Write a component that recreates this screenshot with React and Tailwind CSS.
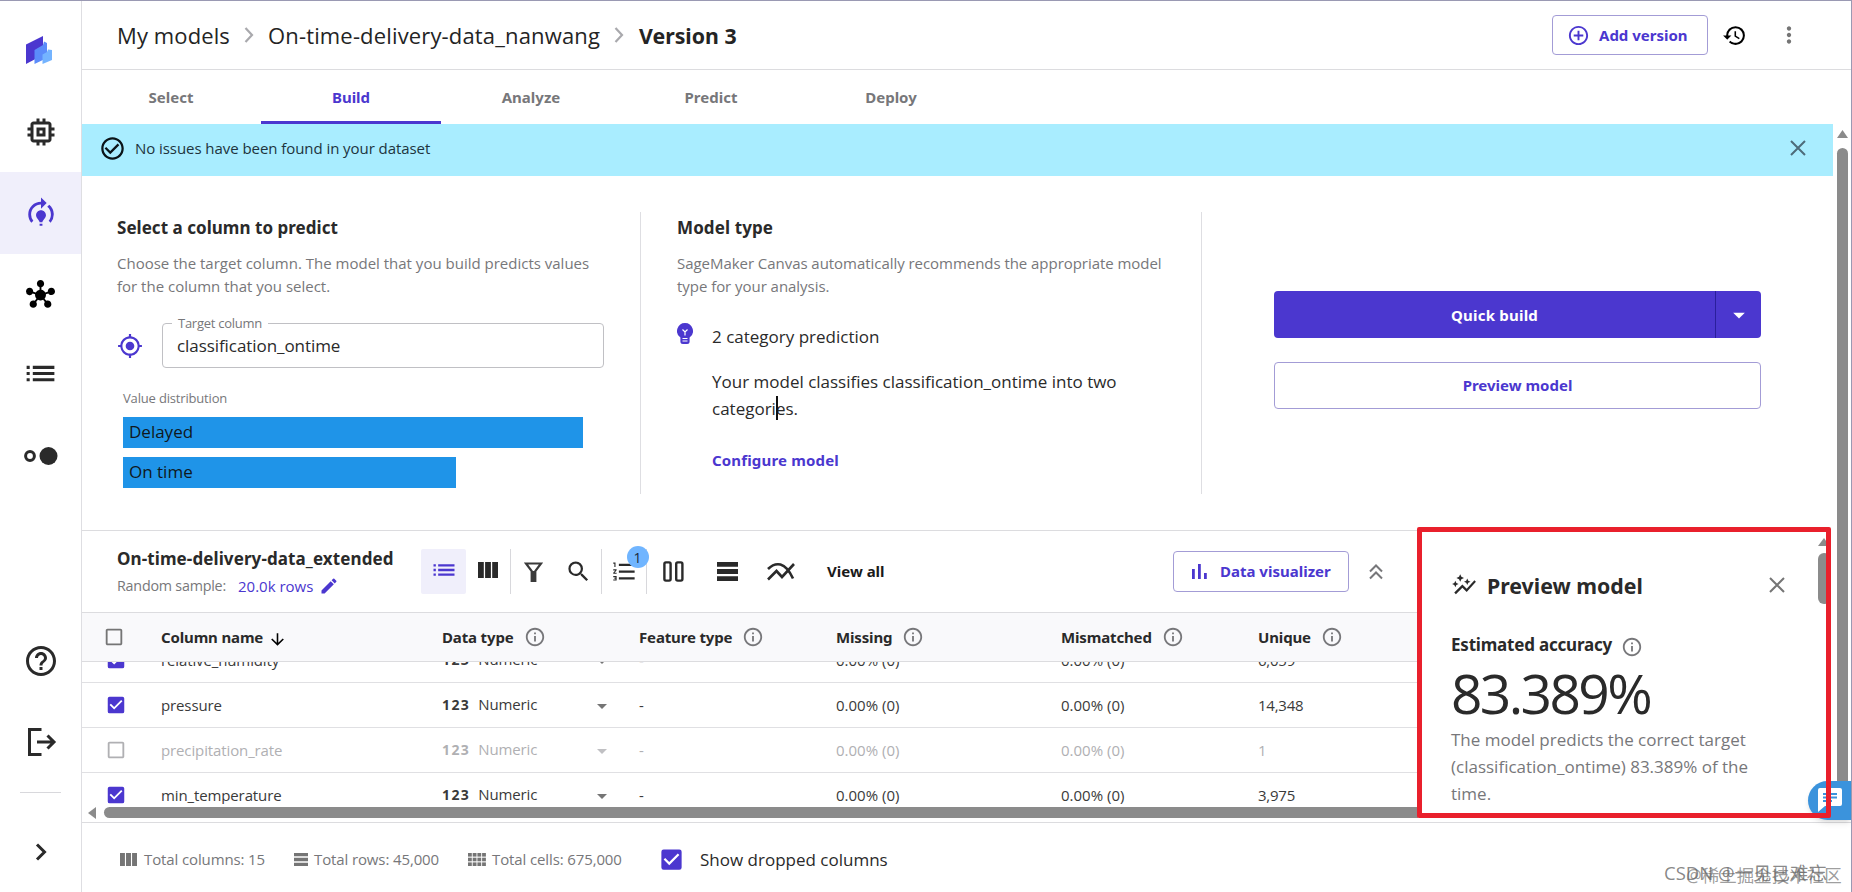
import React from "react";
import {
  MdMemory, MdModelTraining, MdHub, MdList, MdHelpOutline, MdAddCircleOutline,
  MdCheckCircleOutline, MdMyLocation, MdHistory, MdMoreVert, MdEdit,
  MdSearch, MdFormatListNumbered, MdInfoOutline, MdCheckBox, MdCheckBoxOutlineBlank, MdArrowDropDown,
  MdArrowDownward, MdOutlineAutoGraph,
} from "react-icons/md";

const BOLD = "font-['Noto_Sans','Open_Sans',sans-serif] font-bold";

function Logo() {
  return (
    <svg width="28" height="30" viewBox="0 0 28 30">
      <path d="M1 9.500L18 1v19L1 29z" fill="#4b37cf" />
      <path d="M9.500 15L18 10l1-3.500 3 1.500v15L9.500 29z" fill="#5b8cfa" />
      <path d="M17.500 19.500L22 17l1-2.500 4 .5v10l-9.500 4z" fill="#74b4ff" />
    </svg>
  );
}

function Dots() {
  return (
    <svg width="34" height="18" viewBox="0 0 34 18">
      <circle cx="6" cy="9" r="4.400" fill="none" stroke="#2a2a2a" strokeWidth="3" />
      <circle cx="24.500" cy="9" r="9" fill="#2a2a2a" />
    </svg>
  );
}

function Cross({ size = 16, className = "" }) {
  return (
    <svg width={size} height={size} viewBox="0 0 16 16" fill="none" stroke="currentColor" strokeWidth="2" className={className}><path d="M1 1l14 14M15 1L1 15" /></svg>
  );
}

const SIDE = [
  { h: "h-20", icon: <MdMemory size={36} /> },
  { h: "h-[82px]", icon: <MdModelTraining size={34} />, on: true },
  { h: "h-20", icon: <MdHub size={29} color="#000" /> },
  { h: "h-[82px]", icon: <MdList size={37} className="-mt-1" /> },
  { h: "h-20", icon: <Dots /> },
];

function Sidebar() {
  return (
    <nav className="flex w-[82px] shrink-0 flex-col items-center border-r border-[#dedee2] text-[#2a2a2a]">
      <div className="flex h-[91px] w-full items-center justify-center pt-1.5 pr-1"><Logo /></div>
      {SIDE.map((s, i) => (
        <div key={i} className={`flex w-full items-center justify-center ${s.h} ${s.on ? "bg-[#f0effb] text-[#4b37cf]" : ""}`}>{s.icon}</div>
      ))}
      <div className="mt-[125px] flex h-[80px] items-center"><MdHelpOutline size={36} /></div>
      <div className="flex h-[82px] items-center pl-0.5">
        <svg width="30" height="30" viewBox="0 0 30 30" fill="none" stroke="currentColor" strokeWidth="3">
          <path d="M14.500 2.500H2.500v25h12M10 15h17M20.500 8.500L27 15l-6.500 6.500" />
        </svg>
      </div>
      <div className="mt-[9px] h-px w-[41px] bg-[#d8d8dc]" />
      <div className="mt-[50px]">
        <svg width="12" height="18" viewBox="0 0 12 18" fill="none" stroke="currentColor" strokeWidth="3"><path d="M2 1.500L9.500 9 2 16.500" /></svg>
      </div>
    </nav>
  );
}

function Crumb() {
  return (
    <svg width="10" height="16" viewBox="0 0 10 16" fill="none" stroke="#a9a9ad" strokeWidth="2.200"><path d="M1.500 1L8 8l-6.500 7" /></svg>
  );
}

function Header() {
  return (
    <header className="flex h-[69px] shrink-0 items-center border-b border-[#dcdcdf] pr-[49px] pl-[35px] text-[22px] text-[#242424]">
      <span className="w-[127px] tracking-[0.005em]">My models</span>
      <Crumb />
      <span className="ml-[14px] w-[346px] tracking-[0.007em]">On-time-delivery-data_nanwang</span>
      <Crumb />
      <span className={`ml-[15px] pt-[2px] text-[21.300px] ${BOLD}`}>Version 3</span>
      <button className={`ml-auto flex h-[40px] w-[156px] items-center rounded-[4px] border border-[#a39cd6] pl-[14px] text-[15px] text-[#4b37cf] ${BOLD}`}>
        <MdAddCircleOutline size={23} className="mr-[9px]" />Add version
      </button>
      <MdHistory size={25} color="#000" className="ml-[14px]" />
      <MdMoreVert size={26} color="#757575" className="ml-[29px]" />
    </header>
  );
}

function Tabs() {
  return (
    <div className={`-ml-px flex h-[54px] shrink-0 text-[15px] text-[#77777a] ${BOLD}`}>
      {["Select", "Build", "Analyze", "Predict", "Deploy"].map((t) => (
        <div key={t} className={`flex w-[180px] items-center justify-center border-b-3 pt-1 ${t === "Build" ? "border-[#4b37cf] text-[#4b37cf]" : "border-transparent"}`}>{t}</div>
      ))}
    </div>
  );
}

function Banner() {
  return (
    <div className="flex h-[52px] items-center bg-[#a9edff] pr-[27px] pb-[4px] pl-[17px] text-[15px] tracking-[-0.004em] text-[#20343d]">
      <MdCheckCircleOutline size={27} color="#0b1418" className="mr-[9px]" />
      No issues have been found in your dataset
      <Cross className="ml-auto text-[#4d6b7a]" />
    </div>
  );
}

function TargetPanel() {
  return (
    <section className="w-[558px] pl-[35px] text-[#2a2a2a]">
      <h2 className={`pt-[4px] text-[17px] leading-[24px] tracking-[0.002em] ${BOLD}`}>Select a column to predict</h2>
      <p className="mt-[12px] w-[490px] text-[15px] leading-[23px] text-[#77777a]">Choose the target column. The model that you build predicts values for the column that you select.</p>
      <div className="mt-[25px] flex items-center">
        <MdMyLocation size={26} color="#4b37cf" />
        <fieldset className="relative ml-[19px] flex h-[45px] w-[442px] items-center rounded-[4px] border border-[#c0c0c4] pt-px pl-[14px] text-[17px] tracking-[-0.004em]">
          <span className="absolute -top-[9px] left-[9px] bg-white px-[6px] text-[13px] leading-[17px] tracking-[-0.02em] text-[#77777a]">Target column</span>
          classification_ontime
        </fieldset>
      </div>
      <div className="mt-[19px] pl-[6px]">
        <div className="text-[13px] leading-[22px] tracking-[-0.013em] text-[#77777a]">Value distribution</div>
        <div className="mt-[8px] h-[31px] w-[460px] bg-[#1f94e8] pl-[6px] text-[17px] leading-[30px] text-[#101820]">Delayed</div>
        <div className="mt-[9px] h-[31px] w-[333px] bg-[#1f94e8] pl-[6px] text-[17px] leading-[29px] text-[#101820]">On time</div>
      </div>
    </section>
  );
}

function ModelType() {
  return (
    <section className="w-[562px] border-x border-[#dedee2] pl-[36px] text-[#2a2a2a]">
      <h2 className={`pt-[4px] text-[17px] leading-[24px] tracking-[0.006em] ${BOLD}`}>Model type</h2>
      <p className="mt-[12px] w-[500px] text-[15px] leading-[23px] tracking-[-0.003em] text-[#77777a]">SageMaker Canvas automatically recommends the appropriate model type for your analysis.</p>
      <div className="mt-[25px] flex">
        <svg width="16" height="21" viewBox="0 0 16 21" className="mr-[19px] shrink-0">
          <path d="M8 0a8 8 0 0 0-4.600 14.500V18.500A2.500 2.500 0 0 0 5.900 21h4.200a2.500 2.500 0 0 0 2.500-2.500v-4A8 8 0 0 0 8 0z" fill="#4b37cf" />
          <path d="M5.500 6.500L8 9l2.500-2.500M8 9v3.500M5.500 15.500h5M5.500 18h5" stroke="#fff" strokeWidth="1.200" fill="none" />
        </svg>
        <div className="text-[17px] leading-[27px]">
          <div>2 category prediction</div>
          <p className="relative mt-[18px] w-[420px]">
            Your model classifies classification_ontime into two categories.
            <span className="absolute top-[28px] left-[64px] h-[24px] w-[2px] bg-[#111]" />
          </p>
          <div className={`mt-[25px] text-[15px] tracking-[0.011em] text-[#4b37cf] ${BOLD}`}>Configure model</div>
        </div>
      </div>
    </section>
  );
}

function Actions() {
  return (
    <section className={`flex flex-1 flex-col pt-[79px] pr-[72px] pl-[72px] text-[15px] ${BOLD}`}>
      <div className="flex h-[47px] rounded-[4px] bg-[#4b37cf] text-white">
        <div className="flex flex-1 items-center justify-center pt-px tracking-[0.014em]">Quick build</div>
        <div className="flex w-[46px] items-center justify-center border-l border-[#2a1f9c]"><MdArrowDropDown size={28} /></div>
      </div>
      <div className="mt-[24px] flex h-[47px] items-center justify-center rounded-[4px] border border-[#a39cd6] text-[#4b37cf]">Preview model</div>
    </section>
  );
}

function ColumnsIcon({ w = 20, h = 16, c = "#2a2a2a" }) {
  return (
    <svg width={w} height={h} viewBox="0 0 20 16" preserveAspectRatio="none" fill={c}><path d="M0 0h5.800v16H0zM7.100 0h5.800v16H7.100zM14.200 0H20v16h-5.800z" /></svg>
  );
}

function RowsIcon({ w = 21, h = 19, c = "#2a2a2a" }) {
  return (
    <svg width={w} height={h} viewBox="0 0 21 19" preserveAspectRatio="none" fill={c}><path d="M0 0h21v4.800H0zM0 7.100h21v4.800H0zM0 14.200h21V19H0z" /></svg>
  );
}

function CellsIcon() {
  return (
    <svg width="18" height="13" viewBox="0 0 18 13" fill="#757575">
      {[0, 4.700, 9.400].map((y) => [0, 4.700, 9.400, 14.100].map((x) => <rect key={`${x}-${y}`} x={x} y={y} width="3.800" height="3.600" />))}
    </svg>
  );
}

function Tool({ w, on, sep, children }) {
  return (
    <div className={`flex h-[45px] items-center justify-center ${w} ${on ? "rounded-[2px] bg-[#f0effb]" : ""} ${sep ? "border-r border-[#d8d8dc]" : ""}`}>{children}</div>
  );
}

function Toolbar() {
  return (
    <div className="flex h-[82px] shrink-0 items-center border-t border-[#dcdcdf] pl-[35px] text-[#2a2a2a]">
      <div className="w-[304px] pt-[3px]">
        <div className={`text-[17px] leading-[26px] tracking-[0.006em] ${BOLD}`}>On-time-delivery-data_extended</div>
        <div className="flex items-center text-[15px] leading-[28px]">
          <span className="w-[121px] text-[14.300px] tracking-[-0.015em] text-[#77777a]">Random sample:</span>
          <span className="text-[#4b37cf]">20.0k rows</span>
          <MdEdit size={20} color="#4b37cf" className="ml-[6px]" />
        </div>
      </div>
      <Tool w="w-[45px]" on>
        <MdList size={28} color="#4b37cf" className="mb-1" />
      </Tool>
      <Tool w="w-[45px]" sep><div className="mb-1"><ColumnsIcon /></div></Tool>
      <Tool w="w-[45px]">
        <svg width="19" height="20" viewBox="0 0 19 20" fill="none" stroke="#3a3a3a" strokeWidth="2.200"><path d="M2 1.500h15L11.300 9v9.900H7.700V9z" /><path d="M9.500 9v9" strokeWidth="3" /></svg>
      </Tool>
      <Tool w="w-[46px]" sep><MdSearch size={27} /></Tool>
      <Tool w="w-[45px]" sep>
        <div className="relative">
          <MdFormatListNumbered size={27} />
          <span className="absolute -top-[12px] left-[16px] flex size-[22px] items-center justify-center rounded-full bg-[#70b5ff] text-[14px] text-[#1a2a3a]">1</span>
        </div>
      </Tool>
      <Tool w="w-[53px]">
        <svg width="21" height="21" viewBox="0 0 21 21" fill="none" stroke="#2a2a2a" strokeWidth="2.400"><rect x="1.400" y="1.400" width="6.200" height="18.200" rx="1.500" /><rect x="13.200" y="1.400" width="6.200" height="18.200" rx="1.500" /></svg>
      </Tool>
      <Tool w="w-[54px]"><RowsIcon /></Tool>
      <Tool w="w-[54px]">
        <svg width="28" height="20" viewBox="0 0 28 20" fill="none" stroke="#2a2a2a" strokeWidth="2.600"><path d="M1 17.500l8.500-8.500 5.500 6L27 2" /><path d="M1 7c4-4 8-5.500 12.500-4.500C19 4 22.500 9 26 16.500" /></svg>
      </Tool>
      <span className={`ml-[19px] text-[15px] text-[#1a1a1a] ${BOLD}`}>View all</span>
      <button className={`ml-auto flex h-[41px] w-[176px] items-center rounded-[4px] border border-[#a39cd6] pl-[18px] text-[15px] text-[#4b37cf] ${BOLD}`}>
        <svg width="15" height="15" viewBox="0 0 15 15" fill="#4b37cf" className="mr-[13px]"><path d="M0 5h2.800v10H0zM6 0h2.800v15H6zM12 9h2.800v6H12z" /></svg>
        Data visualizer
      </button>
      <svg width="14" height="16" viewBox="0 0 14 16" fill="none" stroke="#77777a" strokeWidth="2" className="mr-[35px] ml-[20px]"><path d="M1 7.500l6-6 6 6M1 14.500l6-6 6 6" /></svg>
    </div>
  );
}

const GRID = "grid grid-cols-[79px_281px_197px_197px_225px_197px_1fr] items-center";

function Head() {
  return (
    <div className={`h-[50px] shrink-0 border-y border-[#dcdcdf] bg-[#f9f9fb] text-[15px] text-[#2a2a2a] ${GRID} ${BOLD}`}>
      <div className="pl-[21px]"><MdCheckBoxOutlineBlank size={22} color="#757575" /></div>
      <div className="flex items-center tracking-[-0.01em]">Column name<MdArrowDownward size={19} color="#000" className="mt-1 ml-[5px]" /></div>
      {["Data type", "Feature type", "Missing", "Mismatched", "Unique"].map((t) => (
        <div key={t} className="flex items-center tracking-[-0.01em]">{t}<MdInfoOutline size={22} color="#77777a" className="ml-[10px]" /></div>
      ))}
    </div>
  );
}

const ROWS = [
  ["relative_humidity", "6,059"],
  ["pressure", "14,348"],
  ["precipitation_rate", "1", true],
  ["min_temperature", "3,975"],
];

function Row({ name, unique, dropped }) {
  return (
    <div className={`h-[45px] shrink-0 border-b border-[#e0e0e3] text-[15px] ${GRID} ${dropped ? "text-[#b0b0b3]" : "text-[#3a3a3a]"}`}>
      <div className="pl-[23px]">{dropped ? <MdCheckBoxOutlineBlank size={22} /> : <MdCheckBox size={22} color="#4b37cf" />}</div>
      <div className="tracking-[-0.008em]">{name}</div>
      <div className="flex items-center pr-[25px] pb-[2px]">
        <span className={`mr-[8px] text-[14px] tracking-[0.100em] ${BOLD}`}>123</span>
        <span className="tracking-[-0.008em]">Numeric</span>
        <MdArrowDropDown size={24} color={dropped ? "#c0c0c3" : "#757575"} className="mt-[3px] ml-auto" />
      </div>
      <div>-</div>
      <div>0.00% (0)</div>
      <div>0.00% (0)</div>
      <div className="tracking-[-0.015em]">{unique}</div>
    </div>
  );
}

function Table() {
  return (
    <div className="flex h-[292px] w-[1336px] flex-col">
      <Toolbar />
      <Head />
      <div className="h-[142px] shrink-0 overflow-hidden">
        <div className="-mt-[24px]">
          {ROWS.map(([n, u, d]) => <Row key={n} name={n} unique={u} dropped={d} />)}
        </div>
      </div>
      <div className="flex h-[17px] items-center pl-[6px]">
        <svg width="8" height="12" viewBox="0 0 8 12"><path d="M8 0v12L0 6z" fill="#8b8b8b" /></svg>
        <div className="ml-[8px] h-[11px] flex-1 rounded-l-full bg-[#8b8b8b]" />
      </div>
    </div>
  );
}

function PreviewPanel() {
  return (
    <aside className="absolute top-[526px] left-[1417px] z-20 flex h-[291px] w-[414px] rounded-[2px] border-5 border-[#e9202c] text-[#2a2a2a]">
      <div className="flex-1 pl-[29px]">
        <div className="mt-[38px] flex h-[30px] items-center">
          <MdOutlineAutoGraph size={26} className="mr-[10px]" />
          <span className={`pt-[2px] text-[21.300px] ${BOLD}`}>Preview model</span>
          <Cross className="mr-[33px] ml-auto text-[#757575]" />
        </div>
        <div className={`mt-[32px] flex items-center text-[17px] leading-[26px] tracking-[-0.012em] ${BOLD}`}>
          Estimated accuracy<MdInfoOutline size={22} color="#77777a" className="mt-[3px] ml-[9px]" />
        </div>
        <div className="text-[55px] leading-[70px] tracking-[-0.047em]">83.389%</div>
        <p className="-mt-[2px] w-[310px] text-[17px] leading-[27px] text-[#77777a]">The model predicts the correct target (classification_ontime) 83.389% of the time.</p>
      </div>
      <div className="flex w-[8px] flex-col overflow-hidden pt-[6px]">
        <svg width="12" height="8" viewBox="0 0 12 8" className="shrink-0"><path d="M6 0l6 8H0z" fill="#8b8b8b" /></svg>
        <div className="mt-[7px] h-[51px] w-[12px] shrink-0 rounded-full bg-[#8b8b8b]" />
      </div>
    </aside>
  );
}

function Footer() {
  return (
    <footer className="flex flex-1 items-center border-t border-[#dcdcdf] pt-[4px] pl-[38px] text-[15px] text-[#77777a]">
      <ColumnsIcon w={17} h={13} c="#757575" />
      <span className="ml-[7px] w-[150px] tracking-[-0.008em]">Total columns: 15</span>
      <RowsIcon w={14} h={13} c="#757575" />
      <span className="ml-[6px] w-[154px] tracking-[-0.008em]">Total rows: 45,000</span>
      <CellsIcon />
      <span className="ml-[6px] w-[166px] tracking-[-0.008em]">Total cells: 675,000</span>
      <MdCheckBox size={27} color="#4b37cf" />
      <span className="ml-[15px] text-[17px] text-[#2a2a2a]">Show dropped columns</span>
    </footer>
  );
}

export default function App() {
  return (
    <div className="relative flex h-[892px] w-[1852px] overflow-hidden border-t border-r border-[#9a99b3] bg-white font-['Open_Sans','Noto_Sans_CJK_SC',sans-serif]">
      <Sidebar />
      <main className="flex min-w-0 flex-1 flex-col">
        <Header />
        <Tabs />
        <div className="flex h-[698px] shrink-0">
          <div className="w-[1751px]">
            <Banner />
            <div className="h-[354px] pt-[36px]">
              <div className="flex h-[282px]">
                <TargetPanel />
                <ModelType />
                <Actions />
              </div>
            </div>
            <Table />
          </div>
          <div className="flex flex-1 flex-col items-center pt-[6px] pl-[1px]">
            <svg width="11" height="8" viewBox="0 0 11 8"><path d="M5.500 0L11 8H0z" fill="#8b8b8b" /></svg>
            <div className="mt-[10px] h-[668px] w-[11px] rounded-full bg-[#8b8b8b]" />
          </div>
        </div>
        <Footer />
      </main>
      <div className="absolute top-[780px] right-0 z-10 h-[39px] w-[43px] rounded-l-full bg-[#3b93dc] pt-[7px] pl-[10px] shadow-md">
        <svg width="24" height="24" viewBox="0 0 24 24"><path d="M2 0h20a2 2 0 0 1 2 2v14a2 2 0 0 1-2 2H7l-7 6V2a2 2 0 0 1 2-2z" fill="#fff" /><path d="M5 6h14M5 9.500h14M5 13h9" stroke="#3b93dc" strokeWidth="1.800" /></svg>
      </div>
      <PreviewPanel />
      <div className="absolute top-[858px] left-[1664px] z-30 text-[18.500px] leading-[28px] whitespace-nowrap text-[#444]/65">CSDN @一见已难忘</div>
      <div className="absolute top-[860px] left-[1686px] z-30 text-[17.500px] leading-[28px] whitespace-nowrap text-[#666]/65">@稀土掘金技术社区</div>
    </div>
  );
}
